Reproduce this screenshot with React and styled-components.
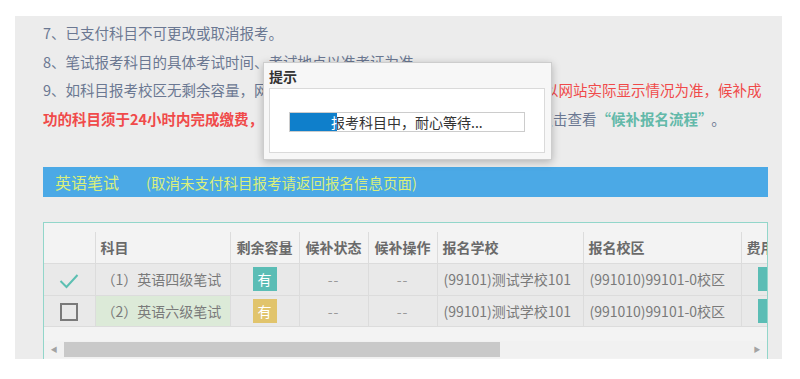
import React from "react";
import styled, { createGlobalStyle } from "styled-components";

const Global = createGlobalStyle`
  html, body { margin: 0; padding: 0; background: #ffffff; }
  body { font-family: "Noto Sans CJK SC", "Noto Sans", sans-serif; }
`;

const Page = styled.div`
  width: 800px;
  height: 379px;
  position: relative;
  overflow: hidden;
  padding: 16px 0 0 15px;
  box-sizing: border-box;
`;

const Panel = styled.div`
  width: 767px;
  height: 343px;
  background: #ececec;
  box-sizing: border-box;
  padding: 3px 14px 0 28px;
  display: flex;
  flex-direction: column;
`;

const Notes = styled.div`
  font-size: 14.5px;
  line-height: 28.5px;
  color: #6b7892;
  white-space: nowrap;
`;

const Line = styled.div`
  height: 28.5px;
`;

const Red = styled.span`
  color: #f04a4a;
  font-weight: ${(p) => (p.$bold ? 700 : 400)};
`;

const Teal = styled.span`
  color: #63b9a9;
  font-weight: 700;
  padding-right: 6px;
`;

const SectionBar = styled.div`
  margin-top: 34px;
  height: 30px;
  width: 725px;
  background: #4ba9e6;
  display: flex;
  align-items: center;
  padding-left: 12px;
  box-sizing: border-box;
  color: #d9ef7c;
  white-space: nowrap;
`;

const SectionTitle = styled.span`
  font-size: 16px;
  margin-right: 27px;
`;

const SectionNote = styled.span`
  font-size: 14.5px;
`;

const Frame = styled.div`
  margin-top: 25px;
  width: 725px;
  height: 137px;
  box-sizing: border-box;
  border: 1px solid #92d6ca;
  border-bottom: none;
  padding-top: 9px;
  display: flex;
  flex-direction: column;
  background: #f3f3f3;
`;

const TableWrap = styled.div`
  width: 723px;
  overflow: hidden;
`;

const Table = styled.table`
  border-collapse: collapse;
  table-layout: fixed;
  width: 760px;
  font-size: 14px;
  white-space: nowrap;
`;

const Th = styled.th`
  height: 31px;
  padding: 0 0 0 ${(p) => (p.$center ? 0 : 5)}px;
  text-align: ${(p) => (p.$center ? "center" : "left")};
  font-weight: 700;
  color: #6a6a6a;
  background: #f3f3f3;
  border: 1px solid #dcdcdc;
  border-top: none;
  overflow: hidden;
  box-sizing: border-box;
  &:first-child { border-left: none; }
`;

const Td = styled.td`
  height: ${(p) => p.$h || 31}px;
  padding: 0 0 0 ${(p) => (p.$center ? 0 : 6)}px;
  text-align: ${(p) => (p.$center ? "center" : "left")};
  color: #7a7a7a;
  background: ${(p) => p.$bg || "#e9e9e9"};
  border: 1px solid #dcdcdc;
  overflow: hidden;
  box-sizing: border-box;
  &:first-child { border-left: none; }
`;

const Badge = styled.span`
  display: inline-flex;
  align-items: center;
  justify-content: center;
  width: 24px;
  height: 24px;
  background: ${(p) => p.$color};
  color: #fff;
  font-size: 14px;
  vertical-align: middle;
`;

const FeeBadge = styled(Badge)`
  margin-left: 10px;
  width: 30px;
`;

const Box = styled.span`
  display: inline-block;
  width: 18px;
  height: 18px;
  box-sizing: border-box;
  border: 2px solid #7a7a7a;
  vertical-align: middle;
`;

const Dash = styled.span`
  color: #999;
  letter-spacing: 1px;
`;

const Scrollbar = styled.div`
  margin-top: 14px;
  height: 17px;
  width: 723px;
  background: #f1f1f1;
  display: flex;
  align-items: center;
`;

const Arrow = styled.div`
  width: 20px;
  height: 17px;
  display: flex;
  align-items: center;
  justify-content: center;
  color: #a3a3a3;
  font-size: 7px;
`;

const Thumb = styled.div`
  width: 436px;
  height: 15px;
  background: #c9c9c9;
`;

const Spacer = styled.div`
  flex: 1;
`;

const Dialog = styled.div`
  position: absolute;
  left: 263px;
  top: 62px;
  width: 289px;
  height: 98px;
  box-sizing: border-box;
  background: #f7f7f7;
  border: 1px solid #cdcdcd;
  box-shadow: 0 2px 8px rgba(0, 0, 0, 0.25);
  display: flex;
  flex-direction: column;
  padding: 0 6px 6px 5px;
`;

const DialogTitle = styled.div`
  height: 25px;
  display: flex;
  align-items: center;
  font-size: 14px;
  font-weight: 700;
  color: #333;
`;

const DialogBody = styled.div`
  flex: 1;
  background: #ffffff;
  border: 1px solid #dadada;
  padding: 23px 0 0 19px;
`;

const Progress = styled.div`
  position: relative;
  width: 236px;
  height: 20px;
  box-sizing: border-box;
  border: 1px solid #cccccc;
  background: #fff;
  font-size: 14px;
  color: #333;
  white-space: nowrap;
`;

const ProgressText = styled.div`
  position: absolute;
  left: 41px;
  top: 0;
  line-height: 18px;
  color: ${(p) => p.$color};
`;

const ProgressFill = styled.div`
  position: absolute;
  left: 0;
  top: 0;
  bottom: 0;
  width: 47px;
  background: #0f7fcb;
  overflow: hidden;
`;

const cols = [51, 135, 69, 69, 69, 146, 158, 63];

const Check = () => (
  <svg width="20" height="16" viewBox="0 0 20 16" style={{ verticalAlign: "middle" }}>
    <polyline points="1.5,8 7.5,14 18.5,2" fill="none" stroke="#5cbfb2" strokeWidth="2" />
  </svg>
);

const rows = [
  { sel: true, name: "（1）英语四级笔试", badge: "#5bbdb5", nameBg: "#e9e9e9", h: 32 },
  { sel: false, name: "（2）英语六级笔试", badge: "#e1c46c", nameBg: "#dcead8", h: 31 },
];

export default function App() {
  const msg = "报考科目中，耐心等待...";
  return (
    <>
      <Global />
      <Page>
        <Panel>
          <Notes>
            <Line>7、已支付科目不可更改或取消报考。</Line>
            <Line>8、笔试报考科目的具体考试时间、考试地点以准考证为准。</Line>
            <Line>
              9、如科目报考校区无剩余容量，网上系统将为考生开放候补，
              <Red>候补报名的结果以网站实际显示情况为准，候补成</Red>
            </Line>
            <Line>
              <Red $bold>功的科目须于24小时内完成缴费，</Red>
              逾期未缴费将自动取消其候补资格，详情请点击查看
              <Teal>“候补报名流程”</Teal>。
            </Line>
          </Notes>
          <SectionBar>
            <SectionTitle>英语笔试</SectionTitle>
            <SectionNote>(取消未支付科目报考请返回报名信息页面)</SectionNote>
          </SectionBar>
          <Frame>
            <TableWrap>
              <Table>
                <colgroup>
                  {cols.map((w, i) => (
                    <col key={i} style={{ width: w }} />
                  ))}
                </colgroup>
                <thead>
                  <tr>
                    <Th />
                    <Th>科目</Th>
                    <Th $center>剩余容量</Th>
                    <Th $center>候补状态</Th>
                    <Th $center>候补操作</Th>
                    <Th>报名学校</Th>
                    <Th>报名校区</Th>
                    <Th>费用</Th>
                  </tr>
                </thead>
                <tbody>
                  {rows.map((r, i) => (
                    <tr key={i}>
                      <Td $center $h={r.h}>{r.sel ? <Check /> : <Box />}</Td>
                      <Td $h={r.h} $bg={r.nameBg}>{r.name}</Td>
                      <Td $center $h={r.h}>
                        <Badge $color={r.badge}>有</Badge>
                      </Td>
                      <Td $center $h={r.h}><Dash>--</Dash></Td>
                      <Td $center $h={r.h}><Dash>--</Dash></Td>
                      <Td $h={r.h}>(99101)测试学校101</Td>
                      <Td $h={r.h}>(991010)99101-0校区</Td>
                      <Td $h={r.h}>
                        <FeeBadge $color="#5bbdb5">0</FeeBadge>
                      </Td>
                    </tr>
                  ))}
                </tbody>
              </Table>
            </TableWrap>
            <Scrollbar>
              <Arrow>◀</Arrow>
              <Thumb />
              <Spacer />
              <Arrow>▶</Arrow>
            </Scrollbar>
          </Frame>
        </Panel>
        <Dialog>
          <DialogTitle>提示</DialogTitle>
          <DialogBody>
            <Progress>
              <ProgressText $color="#333">{msg}</ProgressText>
              <ProgressFill>
                <ProgressText $color="#ffffff">{msg}</ProgressText>
              </ProgressFill>
            </Progress>
          </DialogBody>
        </Dialog>
      </Page>
    </>
  );
}
